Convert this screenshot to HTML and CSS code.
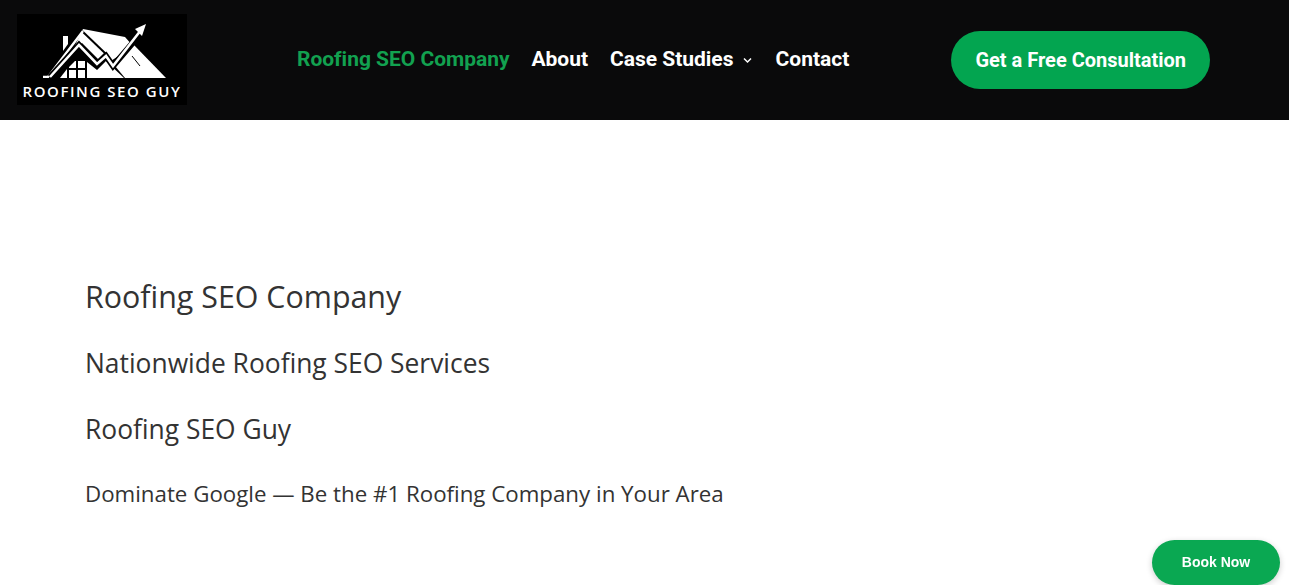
FILE: index.html
```html
<!DOCTYPE html>
<html lang="en">
  <head>
    <meta charset="UTF-8" />
    <meta name="viewport" content="width=device-width, initial-scale=1.0" />
    <title>Roofing SEO Company</title>
    <link rel="stylesheet" href="styles.css">
  </head>
  <body>
    <!-- Header -->
    <header class="header">
      <a class="logo" href="#">
        <svg class="logo-mark" viewBox="17 13 170 64" width="170" height="64">
          <!-- chimney -->
          <path fill="#fff" d="M63 35 L68 35 L68 43 L63 50 Z"/>
          <!-- roof -->
          <path fill="#fff" d="M83 28 L125 36 L133 45 L111 60 L105 51 L98 58 L82 42 L71 53 Z"/>
          <!-- right slope -->
          <path fill="#fff" d="M133 43 L166 77 L125 77 L115 65 Z"/>
          <path fill="none" stroke="#000" stroke-width="1" d="M132 55 L140 65"/>
          <!-- lower house -->
          <path fill="#fff" d="M87 61 L97 69 L106 60 L124 77 L87 77 Z"/>
          <path fill="#fff" d="M60 77 L67 68 L67 77 Z"/>
          <!-- window -->
          <path fill="#fff" d="M69 66 L75 60 L76 60 L76 67 L69 67 Z M78 60 L85 60 L85 67 L78 67 Z M69 69 L76 69 L76 77 L69 77 Z M78 69 L85 69 L85 77 L78 77 Z"/>
          <!-- outer line -->
          <path fill="none" stroke="#000" stroke-width="2" d="M82 30 L106 53"/>
          <path fill="none" stroke="#fff" stroke-width="2.4" d="M43 76 L48 76 L83 30"/>
          <!-- inner line and arrow -->
          <path fill="none" stroke="#000" stroke-width="6" d="M50 76 L79 44 L97 63 L106 55 L113 65 L136 38"/>
          <path fill="none" stroke="#fff" stroke-width="2.6" d="M50 76 L79 44 L97 63 L106 55 L113 65 L141 29"/>
          <path fill="#fff" d="M146 23 L135 28 L142 35 Z"/>
        </svg>
        <span class="logo-text">ROOFING SEO GUY</span>
      </a>

      <nav class="nav">
        <a class="nav-link active" href="#">Roofing SEO Company</a>
        <a class="nav-link" href="#">About</a>
        <a class="nav-link" href="#">Case Studies
          <svg class="chevron" viewBox="0 0 11 7" width="11" height="7">
            <path d="M2 1.5 L5.5 5 L9 1.5" fill="none" stroke="#fff" stroke-width="1.5"/>
          </svg>
        </a>
        <a class="nav-link" href="#">Contact</a>
      </nav>

      <a class="cta" href="#">Get a Free Consultation</a>
    </header>

    <!-- Content -->
    <main class="content">
      <h1>Roofing SEO Company</h1>
      <h2>Nationwide Roofing SEO Services</h2>
      <h3>Roofing SEO Guy</h3>
      <h4>Dominate Google — Be the #1 Roofing Company in Your Area</h4>
    </main>

    <a class="book" href="#">Book Now</a>
  </body>
</html>
```

FILE: styles.css
```css
body {
  margin: 0;
  height: 585px;
  overflow: hidden;
  background: #fff;
  font-family: "Open Sans", sans-serif;
  color: #333;
}

a {
  text-decoration: none;
}

.header {
  display: flex;
  align-items: center;
  height: 120px;
  background: #0a0a0b;
  padding-left: 17px;
}

.logo {
  display: flex;
  flex-direction: column;
  align-items: center;
  width: 170px;
  height: 91px;
  margin-bottom: 2px;
  background: #000;
}

.logo-mark {
  display: block;
}

.logo-text {
  font-family: "Open Sans", sans-serif;
  font-size: 15px;
  font-weight: 600;
  letter-spacing: 1.55px;
  line-height: 27px;
  color: #fff;
  white-space: nowrap;
}

.nav {
  display: flex;
  align-items: center;
  gap: 22px;
  margin-left: 110px;
  margin-bottom: 2px;
}

.nav-link {
  font-family: Roboto, sans-serif;
  font-size: 21px;
  font-weight: 700;
  letter-spacing: -0.02px;
  color: #fff;
  white-space: nowrap;
}

.nav-link.active {
  color: #12a150;
}

.chevron {
  margin-left: 3px;
  margin-right: 1px;
  vertical-align: 2px;
}

.cta {
  margin-left: 102px;
  width: 259px;
  height: 58px;
  line-height: 58px;
  text-align: center;
  border-radius: 29px;
  background: #03a550;
  color: #fff;
  font-family: Roboto, sans-serif;
  font-size: 20px;
  font-weight: 700;
}

.content {
  padding: 159px 0 0 85px;
}

.content h1,
.content h2,
.content h3,
.content h4 {
  margin: 0;
  font-weight: 400;
}

.content h1 {
  font-size: 30.4px;
  line-height: 36px;
}

.content h2 {
  margin-top: 33px;
  font-size: 26.4px;
  line-height: 30px;
}

.content h3 {
  margin-top: 36px;
  font-size: 26.4px;
  line-height: 30px;
}

.content h4 {
  margin-top: 37px;
  font-size: 22.3px;
  line-height: 26px;
}

.book {
  position: fixed;
  right: 9px;
  bottom: 0;
  width: 128px;
  height: 45px;
  line-height: 45px;
  text-align: center;
  border-radius: 23px;
  background: #0aa852;
  color: #fff;
  font-family: "Liberation Sans", sans-serif;
  font-size: 14px;
  font-weight: 700;
  box-shadow: 0 2px 6px rgba(0, 0, 0, 0.2);
}
```
